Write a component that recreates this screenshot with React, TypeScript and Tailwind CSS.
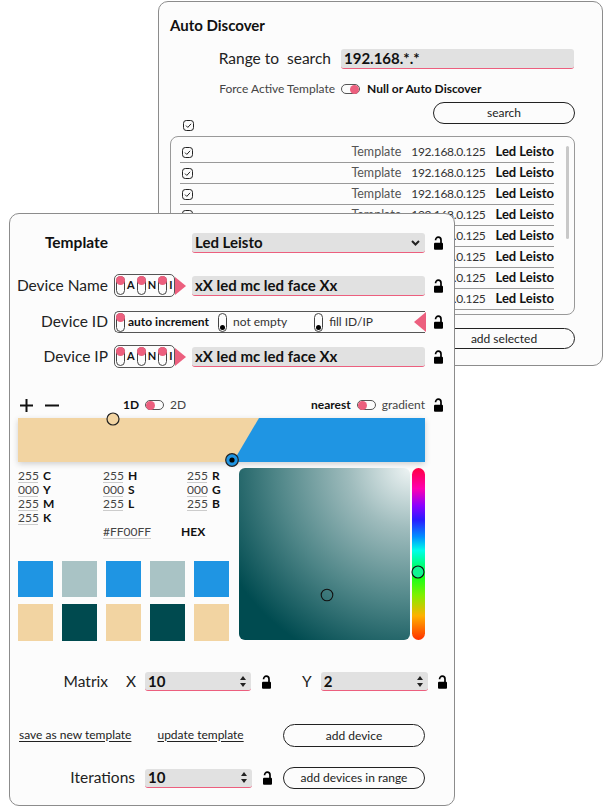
import React from "react";

const PINK = "#ec5f7e";

const Lock = () => (
  <svg width="11" height="14" viewBox="0 0 11 14" className="shrink-0">
    <path d="M2.6 4.2V3.9a2.7 2.7 0 0 1 5.4 0V7.5" fill="none" stroke="#000" strokeWidth="1.7" />
    <rect x="1" y="6.8" width="9" height="7" rx="1" fill="#000" />
  </svg>
);

const Check = () => (
  <svg width="11" height="11" viewBox="0 0 11 11" className="shrink-0">
    <rect x="0.5" y="0.5" width="10" height="10" rx="2.8" fill="none" stroke="#222" strokeWidth="1" />
    <path d="M3 5.6l1.8 1.8L8.1 3.8" fill="none" stroke="#222" strokeWidth="1" />
  </svg>
);

const VTogglePink = () => (
  <span className="w-[9px] h-[19px] rounded-full border border-[#444] flex flex-col items-center shrink-0 overflow-visible">
    <span className="w-[9px] h-[9px] -mt-[1px] rounded-full bg-[#ec5f7e]" />
  </span>
);

const VToggleBlack = () => (
  <span className="w-[9px] h-[19px] rounded-full border border-[#444] flex flex-col items-center justify-end pb-[1px] shrink-0">
    <span className="w-[5px] h-[5px] rounded-full bg-black" />
  </span>
);

const HToggle = ({ right = false }: { right?: boolean }) => (
  <span
    className={
      "w-[19px] h-[10px] rounded-full border border-[#555] flex items-center shrink-0 " +
      (right ? "justify-end" : "justify-start")
    }
  >
    <span className="w-[9px] h-[9px] rounded-full bg-[#ec5f7e]" />
  </span>
);

const TriRight = () => (
  <svg width="11" height="18" viewBox="0 0 11 18" className="shrink-0">
    <polygon points="0,0 11,9 0,18" fill={PINK} />
  </svg>
);

const UpDown = () => (
  <svg width="6" height="11" viewBox="0 0 6 11" className="shrink-0">
    <polygon points="3,0 6,4 0,4" fill="#222" />
    <polygon points="0,7 6,7 3,11" fill="#222" />
  </svg>
);

const Chevron = () => (
  <svg width="9" height="6" viewBox="0 0 9 6" className="shrink-0">
    <path d="M1 1l3.5 3.5L8 1" fill="none" stroke="#222" strokeWidth="2" />
  </svg>
);

const Field = ({ children, w, h = "h-[20px]" }: { children: React.ReactNode; w: string; h?: string }) => (
  <div
    className={
      "bg-[#e1e1e1] rounded-[3px] border-b-[1.5px] border-[#ec5f7e] flex items-center pl-[3px] pr-[5px] font-bold text-[15px] text-[#111] shrink-0 whitespace-nowrap " +
      w +
      " " +
      h
    }
  >
    {children}
  </div>
);

const ANI = () => (
  <div className="flex items-center shrink-0">
    <div className="w-[61px] h-[23px] rounded-[5px] border border-[#555] flex items-center pl-[1px] gap-[2px] text-[11px] font-bold text-[#111]">
      <VTogglePink />
      <span>A</span>
      <VTogglePink />
      <span>N</span>
      <VTogglePink />
      <span>I</span>
    </div>
    <TriRight />
  </div>
);

const rows = Array.from({ length: 9 });

function BackPanel() {
  return (
    <div className="absolute left-[158px] top-[1px] w-[445px] h-[365px] rounded-[10px] border border-[#8c8c8c] bg-[#fcfcfc] pl-[11px] pr-[27px] pt-[13px] flex flex-col">
      <div className="text-[15px] font-bold leading-[20px] text-[#111]">Auto Discover</div>
      <div className="mt-[12px] h-[20px] grid grid-cols-[171px_233px] items-center">
        <div className="text-right pr-[10px] text-[15.5px] text-[#222] whitespace-nowrap">Range to&nbsp; search</div>
        <Field w="w-[233px]">192.168.*.*</Field>
      </div>
      <div className="mt-[13px] h-[14px] grid grid-cols-[171px_233px] items-center">
        <div className="text-right pr-[6px] text-[12px] text-[#444] whitespace-nowrap">Force Active Template</div>
        <div className="flex items-center">
          <HToggle right />
          <span className="ml-[7px] text-[12px] font-bold text-[#111] whitespace-nowrap">Null or Auto Discover</span>
        </div>
      </div>
      <div className="mt-[8px] flex justify-end">
        <div className="w-[142px] h-[22px] rounded-full border border-[#222] flex items-center justify-center text-[12px] text-[#222]">
          search
        </div>
      </div>
      <div className="-mt-[4px] h-[11px] pl-[13px] flex items-center">
        <Check />
      </div>
      <div className="mt-[5px] h-[179px] relative rounded-[8px] border border-[#999] overflow-hidden pl-[9px] pr-[20px] pt-[5px]">
        {rows.map((_, i) => (
          <div key={i} className="h-[21px] border-b border-[#999] flex items-center whitespace-nowrap">
            <span className="ml-[2px]">
              <Check />
            </span>
            <span className="ml-auto text-[12.5px] text-[#555]">Template</span>
            <span className="ml-[10px] text-[12px] tracking-[-0.3px] text-[#333]">192.168.0.125</span>
            <span className="ml-[10px] text-[13px] font-bold text-[#111]">Led Leisto</span>
          </div>
        ))}
        <div className="absolute right-[5px] top-[9px] h-[93px] w-[3px] rounded-full bg-[#c8c8c8]" />
      </div>
      <div className="mt-[13px] flex justify-end">
        <div className="w-[142px] h-[21px] rounded-full border border-[#222] flex items-center justify-center text-[12px] text-[#222]">
          add selected
        </div>
      </div>
    </div>
  );
}

const Num = ({ v, w = "w-[20px]" }: { v: string; w?: string }) => (
  <span className={"inline-block border-b border-[#ccc] text-[#444] leading-[12px] " + w}>{v}</span>
);

const Val = ({ v, l }: { v: string; l: string }) => (
  <div className="flex items-center h-[14px]">
    <Num v={v} />
    <span className="ml-[5px] font-bold text-[#111]">{l}</span>
  </div>
);

function FrontPanel() {
  const sw1 = ["bg-[#1f95e3]", "bg-[#a9c3c5]", "bg-[#1f95e3]", "bg-[#a9c3c5]", "bg-[#1f95e3]"];
  const sw2 = ["bg-[#f2d4a2]", "bg-[#004a4f]", "bg-[#f2d4a2]", "bg-[#004a4f]", "bg-[#f2d4a2]"];
  return (
    <div className="absolute left-[9px] top-[213px] w-[446px] h-[593px] rounded-[10px] border border-[#8c8c8c] bg-[#fcfcfc] pt-[19px] flex flex-col text-[#222]">
      {/* Template */}
      <div className="h-[20px] flex items-center">
        <div className="w-[98px] text-right text-[15.5px] font-bold text-[#111]">Template</div>
        <div className="ml-[84px]">
          <Field w="w-[233px]">
            <span>Led Leisto</span>
            <span className="ml-auto">
              <Chevron />
            </span>
          </Field>
        </div>
        <span className="ml-[8px]">
          <Lock />
        </span>
      </div>
      {/* Device Name */}
      <div className="mt-[21px] h-[23px] flex items-center">
        <div className="w-[98px] text-right text-[15.5px] whitespace-nowrap">Device Name</div>
        <div className="ml-[6px]">
          <ANI />
        </div>
        <div className="ml-[6px]">
          <Field w="w-[233px]">xX led mc led face Xx</Field>
        </div>
        <span className="ml-[8px]">
          <Lock />
        </span>
      </div>
      {/* Device ID */}
      <div className="mt-[14px] h-[22px] flex items-center">
        <div className="w-[98px] text-right text-[15.5px] whitespace-nowrap">Device ID</div>
        <div className="ml-[6px] w-[311px] h-[22px] shrink-0 border border-r-0 border-[#555] rounded-l-[5px] flex items-center pl-[1px] text-[12px] whitespace-nowrap">
          <VTogglePink />
          <span className="ml-[3px] font-bold text-[#111]">auto increment</span>
          <span className="ml-[9px]">
            <VToggleBlack />
          </span>
          <span className="ml-[6px] text-[#333]">not empty</span>
          <span className="ml-[27px]">
            <VToggleBlack />
          </span>
          <span className="ml-[6px] text-[#333]">fill ID/IP</span>
          <svg width="12" height="22" viewBox="0 0 12 22" className="ml-auto -mr-[1px] shrink-0">
            <polygon points="12,1 0,11 12,21" fill={PINK} />
          </svg>
        </div>
        <span className="ml-[8px]">
          <Lock />
        </span>
      </div>
      {/* Device IP */}
      <div className="mt-[12px] h-[23px] flex items-center">
        <div className="w-[98px] text-right text-[15.5px] whitespace-nowrap">Device IP</div>
        <div className="ml-[6px]">
          <ANI />
        </div>
        <div className="ml-[6px]">
          <Field w="w-[233px]">xX led mc led face Xx</Field>
        </div>
        <span className="ml-[8px]">
          <Lock />
        </span>
      </div>
      {/* toolbar */}
      <div className="mt-[29px] h-[16px] flex items-center pl-[9px] pr-[10px] text-[12px] whitespace-nowrap">
        <svg width="15" height="15" viewBox="0 0 15 15">
          <path d="M7.5 1v13M1 7.5h13" stroke="#111" strokeWidth="2" />
        </svg>
        <svg width="15" height="15" viewBox="0 0 15 15" className="ml-[10px]">
          <path d="M1 7.5h14" stroke="#111" strokeWidth="2" />
        </svg>
        <span className="ml-[64px] font-bold text-[#111]">1D</span>
        <span className="ml-[6px]">
          <HToggle />
        </span>
        <span className="ml-[6px] text-[#444]">2D</span>
        <span className="ml-auto font-bold text-[#111]">nearest</span>
        <span className="ml-[6px]">
          <HToggle />
        </span>
        <span className="ml-[6px] text-[#444]">gradient</span>
        <span className="ml-[8px]">
          <Lock />
        </span>
      </div>
      {/* gradient bar */}
      <div className="mt-[5px] ml-[8px] w-[407px] h-[44px] relative shadow-[0_2px_6px_rgba(0,0,0,0.18)]">
        <svg width="407" height="44" viewBox="0 0 407 44" className="block">
          <rect x="0" y="0" width="407" height="44" fill="#1f95e3" />
          <polygon points="0,0 241,0 215,44 0,44" fill="#f2d4a2" />
        </svg>
        <svg width="16" height="16" viewBox="0 0 16 16" className="absolute left-[87px] top-[-7px]">
          <circle cx="8" cy="8" r="6" fill="#f2d4a2" stroke="#222" strokeWidth="1.2" />
        </svg>
        <svg width="16" height="16" viewBox="0 0 16 16" className="absolute left-[206px] top-[34px]">
          <circle cx="8" cy="8" r="6.3" fill="#1f95e3" stroke="#222" strokeWidth="1.2" />
          <circle cx="8" cy="8" r="2.6" fill="#000" />
        </svg>
      </div>
      {/* color section */}
      <div className="mt-[6px] ml-[8px] flex">
        <div className="w-[211px] flex flex-col">
          <div className="mt-[1px] grid grid-cols-[85px_84px_42px] text-[12px] leading-[14px]">
            <Val v="255" l="C" />
            <Val v="255" l="H" />
            <Val v="255" l="R" />
            <Val v="000" l="Y" />
            <Val v="000" l="S" />
            <Val v="000" l="G" />
            <Val v="255" l="M" />
            <Val v="255" l="L" />
            <Val v="255" l="B" />
            <Val v="255" l="K" />
            <div />
            <div />
            <div className="h-[14px]" />
            <div className="col-span-2 flex items-center h-[14px]">
              <Num v="#FF00FF" w="w-[48px]" />
              <span className="ml-[30px] font-bold text-[#111]">HEX</span>
            </div>
          </div>
          <div className="mt-[22px] flex justify-between">
            {sw1.map((c, i) => (
              <div key={i} className={"w-[35px] h-[36px] " + c} />
            ))}
          </div>
          <div className="mt-[7px] flex justify-between">
            {sw2.map((c, i) => (
              <div key={i} className={"w-[35px] h-[37px] " + c} />
            ))}
          </div>
        </div>
        <div className="ml-[10px] w-[171px] h-[172px] rounded-[6px] relative bg-[radial-gradient(circle_at_100%_0%,#eef4f4_0%,#9fbcbd_25%,#4f8688_55%,#004b50_85%)]">
          <svg width="14" height="14" viewBox="0 0 14 14" className="absolute left-[81px] top-[120px]">
            <circle cx="7" cy="7" r="5.8" fill="none" stroke="#111" strokeWidth="1.1" />
          </svg>
        </div>
        <div className="ml-[2px] w-[13px] h-[172px] rounded-full relative bg-[linear-gradient(to_bottom,#ff0040_0%,#ff00b0_12%,#8a00ff_22%,#2a1aff_30%,#0090ff_40%,#00ffe8_48%,#00ff80_56%,#1aff1a_64%,#80f000_74%,#ffb000_86%,#ff3000_100%)]">
          <svg width="14" height="14" viewBox="0 0 14 14" className="absolute left-[-1px] top-[97px]">
            <circle cx="7" cy="7" r="6" fill="#10f590" stroke="#111" strokeWidth="1.1" />
          </svg>
        </div>
      </div>
      {/* Matrix */}
      <div className="mt-[31px] h-[19px] flex items-center text-[15.5px]">
        <div className="w-[98px] text-right">Matrix</div>
        <span className="ml-[18px]">X</span>
        <div className="ml-[9px]">
          <Field w="w-[106px]" h="h-[19px]">
            <span>10</span>
            <span className="ml-auto">
              <UpDown />
            </span>
          </Field>
        </div>
        <span className="ml-[10px]">
          <Lock />
        </span>
        <span className="ml-[30px]">Y</span>
        <div className="ml-[9px]">
          <Field w="w-[107px]" h="h-[19px]">
            <span>2</span>
            <span className="ml-auto">
              <UpDown />
            </span>
          </Field>
        </div>
        <span className="ml-[9px]">
          <Lock />
        </span>
      </div>
      {/* links */}
      <div className="mt-[33px] h-[23px] flex items-center">
        <div className="w-[273px] flex items-center pl-[9px] text-[12px] text-[#222] -mt-[2px] whitespace-nowrap">
          <span className="underline underline-offset-2">save as new template</span>
          <span className="ml-[26px] underline underline-offset-2">update template</span>
        </div>
        <div className="w-[142px] h-[23px] rounded-full border border-[#222] flex items-center justify-center text-[12px]">
          add device
        </div>
      </div>
      {/* Iterations */}
      <div className="mt-[20px] h-[22px] flex items-center">
        <div className="w-[125px] text-right text-[15.5px]">Iterations</div>
        <div className="ml-[10px]">
          <Field w="w-[107px]" h="h-[19px]">
            <span>10</span>
            <span className="ml-auto">
              <UpDown />
            </span>
          </Field>
        </div>
        <span className="ml-[10px]">
          <Lock />
        </span>
        <div className="ml-[10px] w-[142px] h-[22px] rounded-full border border-[#222] flex items-center justify-center text-[12px] whitespace-nowrap">
          add devices in range
        </div>
      </div>
    </div>
  );
}

export default function App() {
  return (
    <div className="relative w-[603px] h-[807px] bg-white font-['Lato',sans-serif] text-[#222] overflow-hidden">
      <BackPanel />
      <FrontPanel />
    </div>
  );
}
